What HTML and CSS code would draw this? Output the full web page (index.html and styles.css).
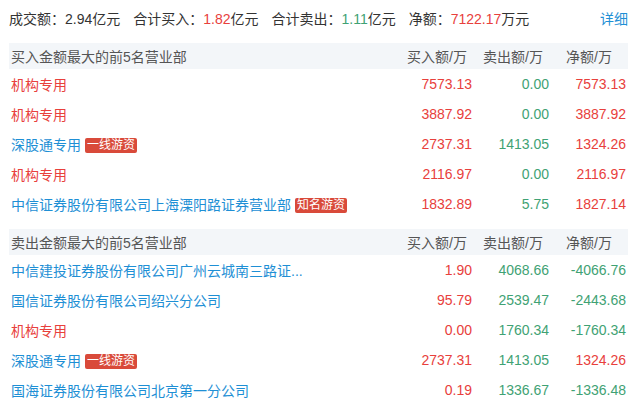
FILE: index.html
```html
<!DOCTYPE html>
<html lang="zh-CN">
<head>
    <meta charset="UTF-8">
    <title>龙虎榜</title>
    <link rel="stylesheet" href="styles.css">
</head>
<body>
    <div class="lhb">
        <div class="summary">
            <span class="item">成交额：2.94亿元</span>
            <span class="item">合计买入：<em class="up">1.82</em>亿元</span>
            <span class="item">合计卖出：<em class="down">1.11</em>亿元</span>
            <span class="item">净额：<em class="up">7122.17</em>万元</span>
            <a class="more" href="#">详细</a>
        </div>

        <!-- 买入 -->
        <div class="table">
            <div class="row head">
                <div class="name">买入金额最大的前5名营业部</div>
                <div class="num buy">买入额/万</div>
                <div class="num sell">卖出额/万</div>
                <div class="num net">净额/万</div>
            </div>
            <div class="row">
                <div class="name org">机构专用</div>
                <div class="num up">7573.13</div>
                <div class="num down">0.00</div>
                <div class="num up">7573.13</div>
            </div>
            <div class="row">
                <div class="name org">机构专用</div>
                <div class="num up">3887.92</div>
                <div class="num down">0.00</div>
                <div class="num up">3887.92</div>
            </div>
            <div class="row">
                <div class="name">深股通专用<span class="tag">一线游资</span></div>
                <div class="num up">2737.31</div>
                <div class="num down">1413.05</div>
                <div class="num up">1324.26</div>
            </div>
            <div class="row">
                <div class="name org">机构专用</div>
                <div class="num up">2116.97</div>
                <div class="num down">0.00</div>
                <div class="num up">2116.97</div>
            </div>
            <div class="row">
                <div class="name">中信证券股份有限公司上海溧阳路证券营业部<span class="tag">知名游资</span></div>
                <div class="num up">1832.89</div>
                <div class="num down">5.75</div>
                <div class="num up">1827.14</div>
            </div>
        </div>

        <!-- 卖出 -->
        <div class="table">
            <div class="row head">
                <div class="name">卖出金额最大的前5名营业部</div>
                <div class="num buy">买入额/万</div>
                <div class="num sell">卖出额/万</div>
                <div class="num net">净额/万</div>
            </div>
            <div class="row">
                <div class="name">中信建投证券股份有限公司广州云城南三路证...</div>
                <div class="num up">1.90</div>
                <div class="num down">4068.66</div>
                <div class="num down">-4066.76</div>
            </div>
            <div class="row">
                <div class="name">国信证券股份有限公司绍兴分公司</div>
                <div class="num up">95.79</div>
                <div class="num down">2539.47</div>
                <div class="num down">-2443.68</div>
            </div>
            <div class="row">
                <div class="name org">机构专用</div>
                <div class="num up">0.00</div>
                <div class="num down">1760.34</div>
                <div class="num down">-1760.34</div>
            </div>
            <div class="row">
                <div class="name">深股通专用<span class="tag">一线游资</span></div>
                <div class="num up">2737.31</div>
                <div class="num down">1413.05</div>
                <div class="num up">1324.26</div>
            </div>
            <div class="row">
                <div class="name">国海证券股份有限公司北京第一分公司</div>
                <div class="num up">0.19</div>
                <div class="num down">1336.67</div>
                <div class="num down">-1336.48</div>
            </div>
        </div>
    </div>
</body>
</html>
```

FILE: styles.css
```css
/* General */
body {
    margin: 0;
    background: #fff;
    font-family: "Liberation Sans", "Noto Sans CJK SC", sans-serif;
    font-size: 14px;
    color: #333;
}

.lhb {
    padding: 0 7px 0 9px;
}

em {
    font-style: normal;
}

.up {
    color: #e8403c;
}

.down {
    color: #3fa274;
}

/* Summary line */
.summary {
    display: flex;
    align-items: center;
    height: 36px;
}

.summary .item {
    margin-right: 13px;
}

.summary .more {
    margin-left: auto;
    color: #1e8fd5;
    text-decoration: none;
}

/* Tables */
.table {
    margin-top: 7px;
}

.table + .table {
    margin-top: 10px;
}

.row {
    display: grid;
    grid-template-columns: 1fr 77px 77px 77px;
    align-items: center;
    height: 30px;
}

.row.head {
    height: 26px;
    background: #f3f6f9;
    color: #555;
}

.name {
    padding-left: 2px;
    color: #1e8fd5;
    white-space: nowrap;
}

.head .name {
    color: #555;
}

.name.org {
    color: #e8403c;
}

.num {
    text-align: right;
    padding-right: 2px;
}

.head .buy {
    padding-right: 7px;
}

.head .sell {
    padding-right: 8px;
}

.head .net {
    padding-right: 16px;
}

.tag {
    display: inline-block;
    margin-left: 4px;
    padding: 0 2px;
    height: 15px;
    line-height: 15px;
    font-size: 12px;
    color: #fff;
    background: #d94a3a;
    border-radius: 2px;
    vertical-align: 1px;
}
```
